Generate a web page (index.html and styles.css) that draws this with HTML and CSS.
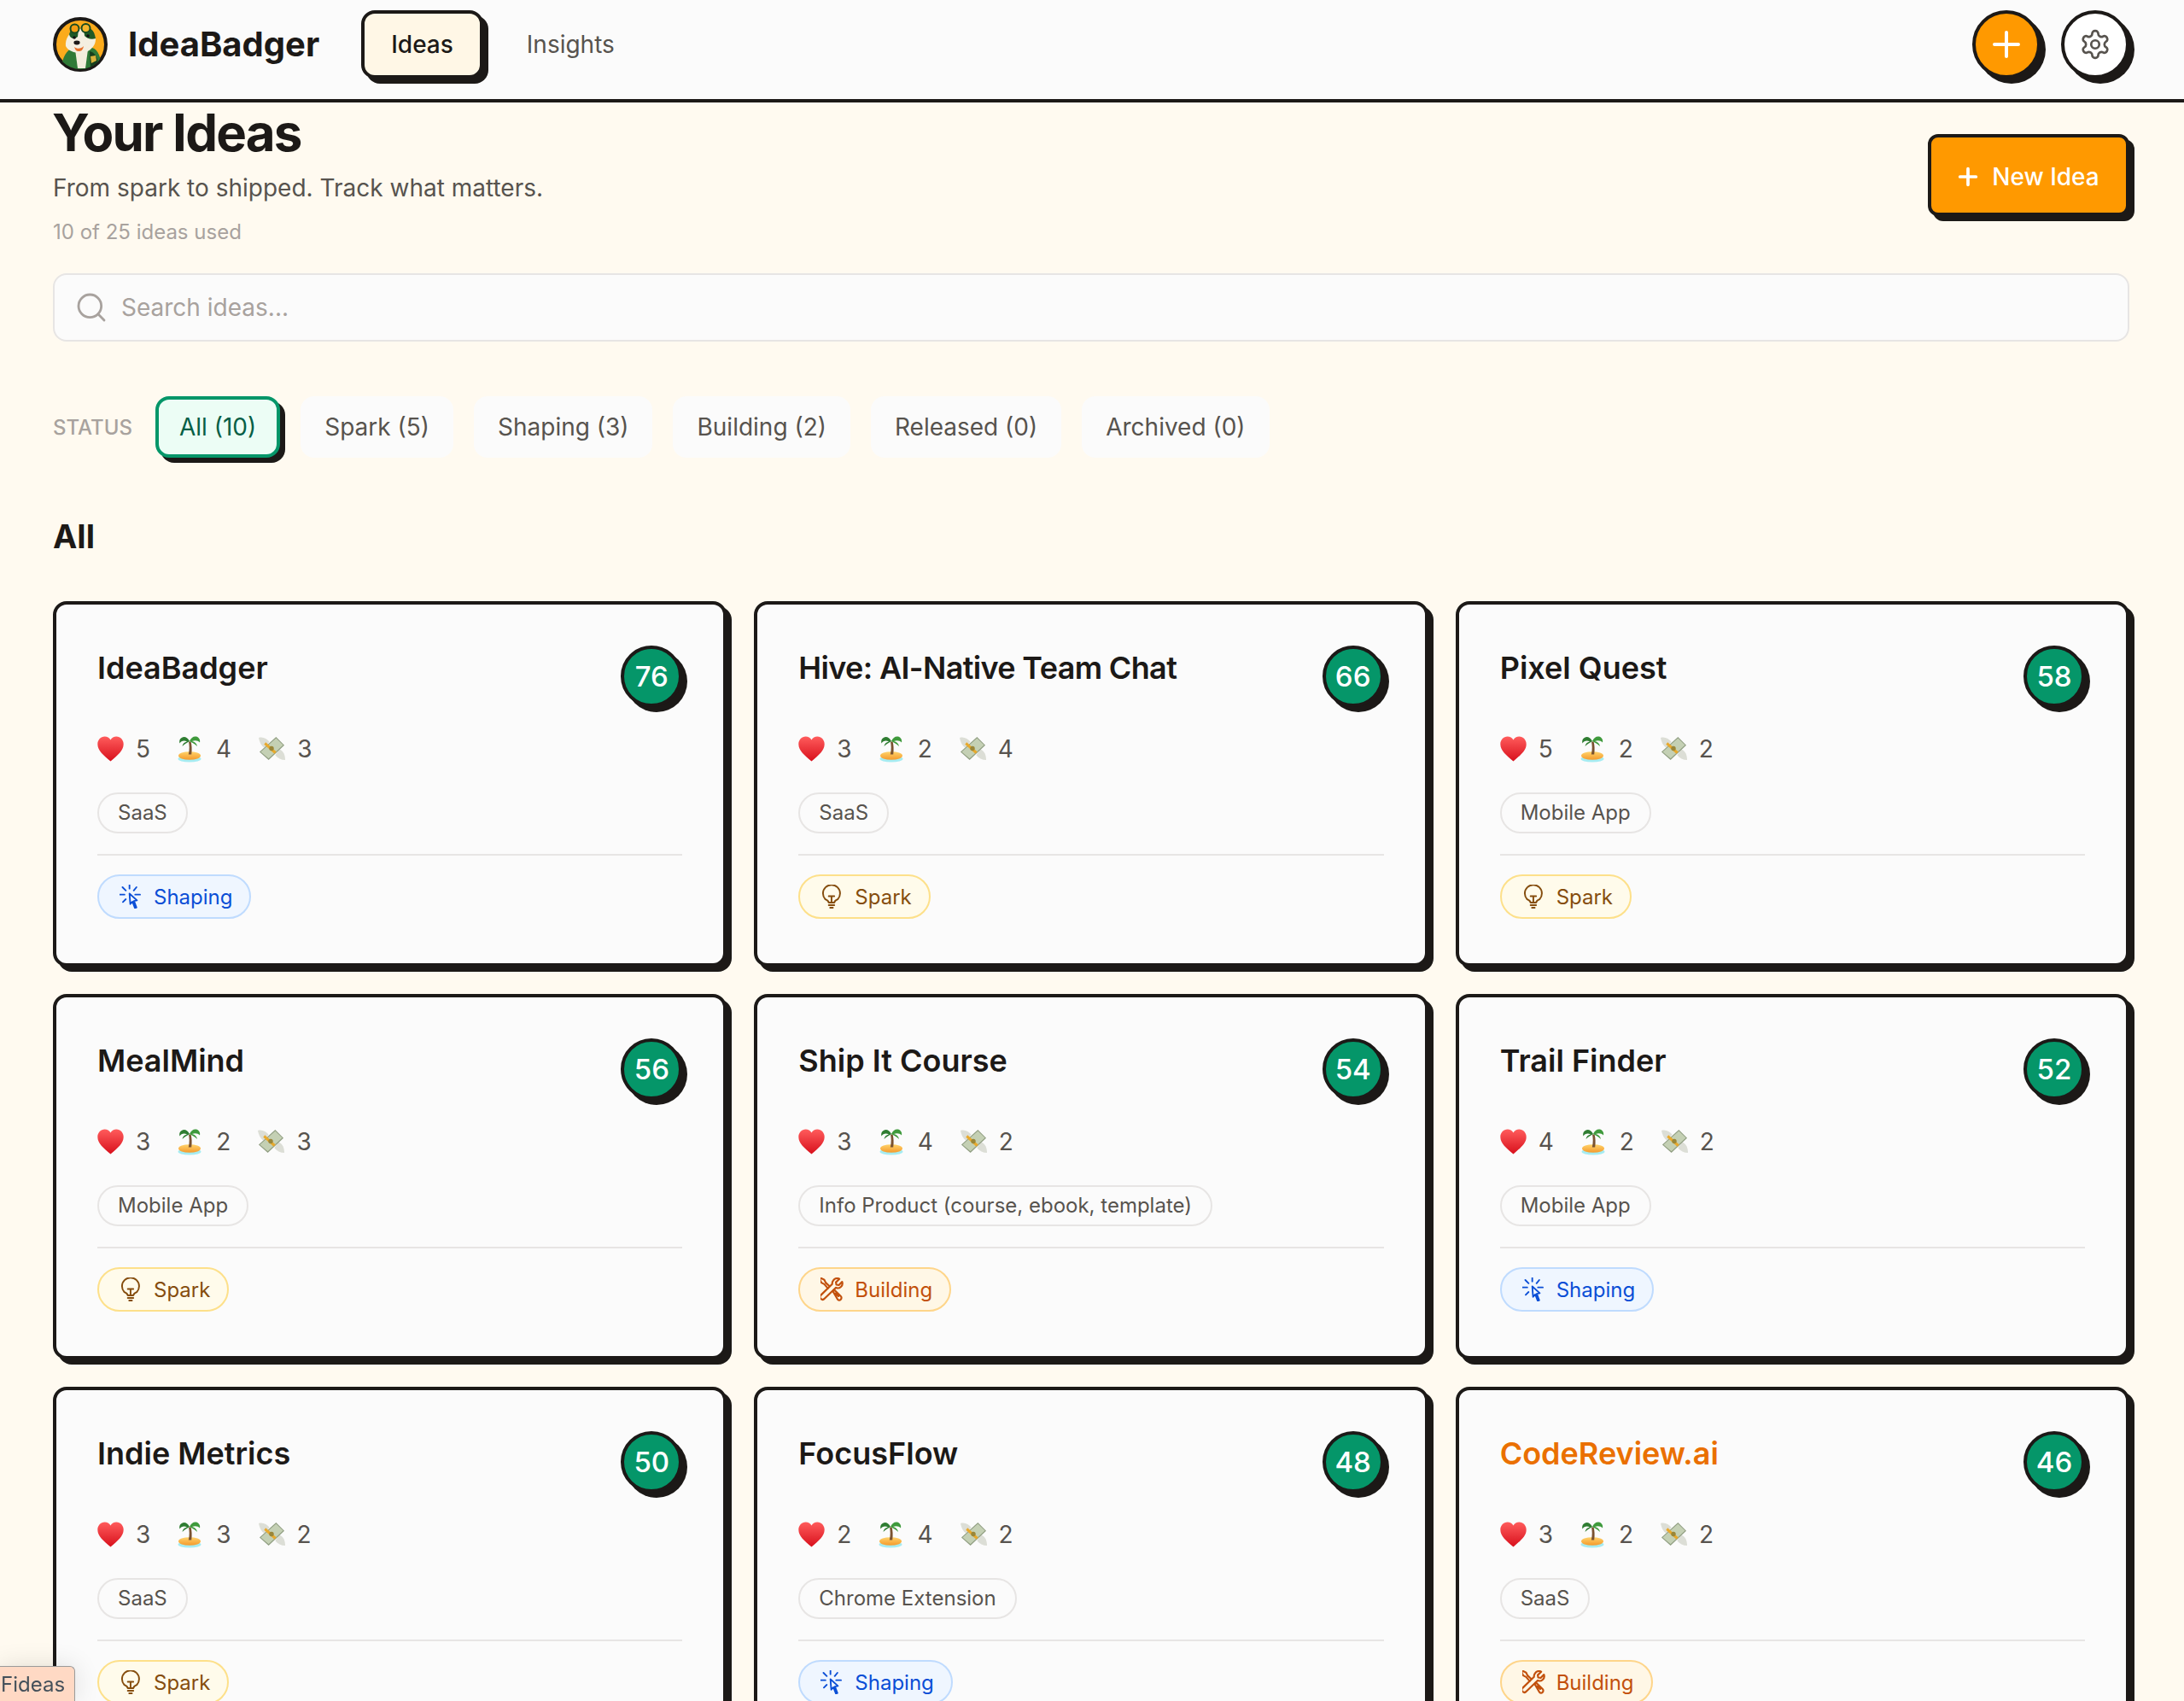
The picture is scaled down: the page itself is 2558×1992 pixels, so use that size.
FILE: index.html
```html
<!DOCTYPE html>
<html lang="en">
<head>
    <meta charset="UTF-8">
    <title>IdeaBadger</title>
    <link rel="stylesheet" href="styles.css">
</head>

<body>
  <!-- shared icons -->
  <svg class="sprite" xmlns="http://www.w3.org/2000/svg">
    <defs>
      <linearGradient id="heart-fill" x1="0" y1="0" x2="0" y2="1">
        <stop offset="0" stop-color="#ff5c5c"/>
        <stop offset="1" stop-color="#d8101c"/>
      </linearGradient>
      <linearGradient id="sand-fill" x1="0" y1="0" x2="0" y2="1">
        <stop offset="0" stop-color="#ffd36b"/>
        <stop offset="1" stop-color="#f49a2c"/>
      </linearGradient>
      <symbol id="i-heart" viewBox="0 0 30 30">
        <path fill="url(#heart-fill)" d="M15 29C7 22 .3 17 .3 9.600 .3 4.800 3.900 1 8.400 1c2.800 0 5.200 1.400 6.600 3.800C16.400 2.400 18.800 1 21.600 1c4.500 0 8.100 3.800 8.100 8.600C29.700 17 23 22 15 29z"/>
      </symbol>
      <symbol id="i-island" viewBox="0 0 31 32">
        <ellipse cx="14" cy="27.800" rx="13.500" ry="3.800" fill="#a6ecf2"/>
        <ellipse cx="14" cy="24" rx="13" ry="4.800" fill="url(#sand-fill)"/>
        <path d="M13 7.500c.8 4 1.200 9 -.2 15h3.400c.8-6 .4-11-.6-15z" fill="#7a5230"/>
        <path d="M14 7C11 1 6 .5 3 4.500c-1 1.500-1 3.500-.5 5C4 6.500 8 5.500 11 7.500 8 8 6 10 5.500 13 8.500 10 11.500 8.500 14 7z" fill="#2f7d32"/>
        <path d="M14 7c2-5 7-7 10.500-4 1.500 1.500 2 3.500 1.500 5.500-2-2.500-6-3-9-1.500 3 .5 5.500 2.500 6 6C20 10 17 8.500 14 7z" fill="#3f9a3c"/>
      </symbol>
      <symbol id="i-money" viewBox="0 0 32 31">
        <path d="M0 2c5-1.500 10 1 13 5l-6 7C3 12 1 7 0 2z" fill="#dcded6"/>
        <path d="M32 29c-5 0-9-2-12-6l5-7c5 2 7 7 7 13z" fill="#dcded6"/>
        <path d="M1 19 21 1l10 10-19 18z" fill="#8f9d80"/>
        <path d="M2.500 19 21 2.500l8.500 8.300L12 27z" fill="#c4d0b4"/>
        <path d="M8.500 7.500l13 11.500-2.500 2.500L6.500 10z" fill="#e8a92c"/>
        <circle cx="15.500" cy="15" r="2.800" fill="#9a8638"/>
      </symbol>
      <symbol id="i-spark" viewBox="1 0 24 26" fill="none" stroke="currentColor" stroke-width="1.800" stroke-linecap="round" stroke-linejoin="round">
        <path d="M9 19.500c-.2-1.300-1.300-2.400-3.700-3.500A9.300 9.300 0 1 1 18.700 16c-2.400 1.100-3.500 2.200-3.700 3.500z"/>
        <path d="M9 12.500h6M12 12.500v7M9 22.200h6M10.500 25h3"/>
      </symbol>
      <symbol id="i-shaping" viewBox="0 0 24 24" fill="none" stroke="currentColor" stroke-width="1.600" stroke-linecap="round" stroke-linejoin="round">
        <path d="M10 .5v3.500M3 2.600l3.300 3.300M17 2.600l-2.700 3.300M.3 10h4.700M15.700 10h4.900M3.400 17.400l2.900-2.800"/>
        <path d="M10 9l.8 10.500 2.200-2.500 2.500 6.500 1.500-.6-2.500-6.500 3-.6z"/>
      </symbol>
      <symbol id="i-building" viewBox="3 1.500 22 22" fill="none" stroke="currentColor" stroke-width="1.700" stroke-linecap="round" stroke-linejoin="round">
        <path d="M14.800 4.200a4.300 4.300 0 0 1 5.600-1.400l-3.200 3.100.4 2.300 2.300.4 3-3.100a4.300 4.300 0 0 1-5.800 5.400L6.700 21a2.300 2.300 0 0 1-3.500-3.100L13.800 7.600a4.300 4.300 0 0 1 1-3.400z"/>
        <path d="M9.700 11.400 6.500 7.700 3.800 6.300 2.300 3.500l1.300-1.300 2.900 1.500 1.300 2.600 3.500 3.300"/>
        <path d="M14.300 14l1.200-1.200 6.200 6a2 2 0 0 1-2.900 2.900zM17 16.200l2.500 2.500"/>
      </symbol>
    </defs>
  </svg>

  <header class="topbar">
    <div class="brand">
      <svg class="logo" viewBox="0 0 64 64" xmlns="http://www.w3.org/2000/svg">
        <defs><clipPath id="logo-clip"><circle cx="32" cy="32" r="29"/></clipPath></defs>
        <circle cx="32" cy="32" r="30" fill="#fbab1c" stroke="#1c1917" stroke-width="4"/>
        <g clip-path="url(#logo-clip)">
          <path d="M10 62c0-14 6-24 14-26l22 0c7 2 11 12 11 26z" fill="#2f7a37"/>
          <path d="M26 38l3 22h9l3-22z" fill="#f3eedd"/>
          <path d="M43 40c6 1 10 8 10 17l-9 3z" fill="#173f1d"/>
          <path d="M15 34c-1-8 4-17 13-20l12-1c6 2 9 7 10 13 0 7-5 12-11 15-8 2-20 1-24-7z" fill="#f4efe0"/>
          <path d="M21 15l-2 5c1 6 7 6 10 3l1-9zM36 13l1 9c3 3 8 5 13 3-1-6-3-10-7-12z" fill="#1e5a26"/>
          <circle cx="25" cy="24" r="1.800" fill="#111"/>
          <circle cx="41" cy="22" r="1.800" fill="#111"/>
          <circle cx="25.500" cy="13.500" r="5" fill="#f39c12" stroke="#174a1f" stroke-width="2"/>
          <circle cx="38.500" cy="13" r="5" fill="#f5b52c" stroke="#174a1f" stroke-width="2"/>
          <ellipse cx="28" cy="30" rx="3.600" ry="2.400" fill="#1c1917"/>
          <path d="M25 35c3 2.500 8 2.500 11-1-1 5-3 6-6 6-3 0-4-2-5-5z" fill="#e8722c"/>
          <path d="M44 46l6-1 1 6-6 3z" fill="#d9b23a"/>
        </g>
      </svg>
      <span class="brand-name">IdeaBadger</span>
    </div>
    <nav class="nav">
      <a class="nav-link active">Ideas</a>
      <a class="nav-link">Insights</a>
    </nav>
    <div class="top-actions">
      <button class="round-btn orange">
        <svg viewBox="0 0 24 24" width="48" height="48" fill="none" stroke="currentColor" stroke-width="2" stroke-linecap="round"><path d="M5 12h14M12 5v14"/></svg>
      </button>
      <button class="round-btn white">
        <svg viewBox="0 0 24 24" width="38" height="38" fill="none" stroke="currentColor" stroke-width="1.700" stroke-linecap="round" stroke-linejoin="round"><path d="M12.220 2h-.44a2 2 0 0 0-2 2v.18a2 2 0 0 1-1 1.730l-.43.25a2 2 0 0 1-2 0l-.15-.08a2 2 0 0 0-2.730.73l-.22.38a2 2 0 0 0 .73 2.730l.15.1a2 2 0 0 1 1 1.720v.51a2 2 0 0 1-1 1.740l-.15.09a2 2 0 0 0-.73 2.730l.22.38a2 2 0 0 0 2.730.73l.15-.08a2 2 0 0 1 2 0l.43.25a2 2 0 0 1 1 1.730V20a2 2 0 0 0 2 2h.44a2 2 0 0 0 2-2v-.18a2 2 0 0 1 1-1.730l.43-.25a2 2 0 0 1 2 0l.15.08a2 2 0 0 0 2.730-.73l.22-.39a2 2 0 0 0-.73-2.730l-.15-.08a2 2 0 0 1-1-1.740v-.5a2 2 0 0 1 1-1.740l.15-.09a2 2 0 0 0 .73-2.730l-.22-.38a2 2 0 0 0-2.730-.73l-.15.08a2 2 0 0 1-2 0l-.43-.25a2 2 0 0 1-1-1.730V4a2 2 0 0 0-2-2z"/><circle cx="12" cy="12" r="3"/></svg>
      </button>
    </div>
  </header>

  <main class="page">
    <div class="page-head">
      <div>
        <h1>Your Ideas</h1>
        <p class="subtitle">From spark to shipped. Track what matters.</p>
        <p class="usage">10 of 25 ideas used</p>
      </div>
      <button class="new-idea">
        <svg viewBox="0 0 24 24" width="32" height="32" fill="none" stroke="currentColor" stroke-width="2.800" stroke-linecap="round"><path d="M5 12h14M12 5v14"/></svg>
        New Idea
      </button>
    </div>

    <div class="search">
      <svg viewBox="0 0 24 24" width="40" height="40" fill="none" stroke="currentColor" stroke-width="1.700" stroke-linecap="round"><circle cx="11" cy="11" r="8"/><path d="m21 21-4.300-4.300"/></svg>
      <span>Search ideas...</span>
    </div>

    <div class="filters">
      <span class="filter-label">STATUS</span>
      <a class="filter selected">All (10)</a>
      <a class="filter">Spark (5)</a>
      <a class="filter">Shaping (3)</a>
      <a class="filter">Building (2)</a>
      <a class="filter">Released (0)</a>
      <a class="filter">Archived (0)</a>
    </div>

    <h2>All</h2>

    <div class="grid">
      <article class="card">
        <div class="card-top"><h3>IdeaBadger</h3><span class="score">76</span></div>
        <div class="metrics">
          <span class="metric"><svg class="emoji"><use href="#i-heart"/></svg>5</span>
          <span class="metric"><svg class="emoji"><use href="#i-island"/></svg>4</span>
          <span class="metric"><svg class="emoji"><use href="#i-money"/></svg>3</span>
        </div>
        <div class="category"><span class="tag">SaaS</span></div>
        <span class="status shaping"><svg><use href="#i-shaping"/></svg>Shaping</span>
      </article>

      <article class="card">
        <div class="card-top"><h3 class="tight">Hive: AI-Native Team Chat</h3><span class="score">66</span></div>
        <div class="metrics">
          <span class="metric"><svg class="emoji"><use href="#i-heart"/></svg>3</span>
          <span class="metric"><svg class="emoji"><use href="#i-island"/></svg>2</span>
          <span class="metric"><svg class="emoji"><use href="#i-money"/></svg>4</span>
        </div>
        <div class="category"><span class="tag">SaaS</span></div>
        <span class="status spark"><svg><use href="#i-spark"/></svg>Spark</span>
      </article>

      <article class="card">
        <div class="card-top"><h3>Pixel Quest</h3><span class="score">58</span></div>
        <div class="metrics">
          <span class="metric"><svg class="emoji"><use href="#i-heart"/></svg>5</span>
          <span class="metric"><svg class="emoji"><use href="#i-island"/></svg>2</span>
          <span class="metric"><svg class="emoji"><use href="#i-money"/></svg>2</span>
        </div>
        <div class="category"><span class="tag">Mobile App</span></div>
        <span class="status spark"><svg><use href="#i-spark"/></svg>Spark</span>
      </article>

      <article class="card">
        <div class="card-top"><h3>MealMind</h3><span class="score">56</span></div>
        <div class="metrics">
          <span class="metric"><svg class="emoji"><use href="#i-heart"/></svg>3</span>
          <span class="metric"><svg class="emoji"><use href="#i-island"/></svg>2</span>
          <span class="metric"><svg class="emoji"><use href="#i-money"/></svg>3</span>
        </div>
        <div class="category"><span class="tag">Mobile App</span></div>
        <span class="status spark"><svg><use href="#i-spark"/></svg>Spark</span>
      </article>

      <article class="card">
        <div class="card-top"><h3>Ship It Course</h3><span class="score">54</span></div>
        <div class="metrics">
          <span class="metric"><svg class="emoji"><use href="#i-heart"/></svg>3</span>
          <span class="metric"><svg class="emoji"><use href="#i-island"/></svg>4</span>
          <span class="metric"><svg class="emoji"><use href="#i-money"/></svg>2</span>
        </div>
        <div class="category"><span class="tag">Info Product (course, ebook, template)</span></div>
        <span class="status building"><svg><use href="#i-building"/></svg>Building</span>
      </article>

      <article class="card">
        <div class="card-top"><h3>Trail Finder</h3><span class="score">52</span></div>
        <div class="metrics">
          <span class="metric"><svg class="emoji"><use href="#i-heart"/></svg>4</span>
          <span class="metric"><svg class="emoji"><use href="#i-island"/></svg>2</span>
          <span class="metric"><svg class="emoji"><use href="#i-money"/></svg>2</span>
        </div>
        <div class="category"><span class="tag">Mobile App</span></div>
        <span class="status shaping"><svg><use href="#i-shaping"/></svg>Shaping</span>
      </article>

      <article class="card">
        <div class="card-top"><h3>Indie Metrics</h3><span class="score">50</span></div>
        <div class="metrics">
          <span class="metric"><svg class="emoji"><use href="#i-heart"/></svg>3</span>
          <span class="metric"><svg class="emoji"><use href="#i-island"/></svg>3</span>
          <span class="metric"><svg class="emoji"><use href="#i-money"/></svg>2</span>
        </div>
        <div class="category"><span class="tag">SaaS</span></div>
        <span class="status spark"><svg><use href="#i-spark"/></svg>Spark</span>
      </article>

      <article class="card">
        <div class="card-top"><h3>FocusFlow</h3><span class="score">48</span></div>
        <div class="metrics">
          <span class="metric"><svg class="emoji"><use href="#i-heart"/></svg>2</span>
          <span class="metric"><svg class="emoji"><use href="#i-island"/></svg>4</span>
          <span class="metric"><svg class="emoji"><use href="#i-money"/></svg>2</span>
        </div>
        <div class="category"><span class="tag">Chrome Extension</span></div>
        <span class="status shaping"><svg><use href="#i-shaping"/></svg>Shaping</span>
      </article>

      <article class="card">
        <div class="card-top"><h3 class="hovered">CodeReview.ai</h3><span class="score">46</span></div>
        <div class="metrics">
          <span class="metric"><svg class="emoji"><use href="#i-heart"/></svg>3</span>
          <span class="metric"><svg class="emoji"><use href="#i-island"/></svg>2</span>
          <span class="metric"><svg class="emoji"><use href="#i-money"/></svg>2</span>
        </div>
        <div class="category"><span class="tag">SaaS</span></div>
        <span class="status building"><svg><use href="#i-building"/></svg>Building</span>
      </article>
    </div>
  </main>

  <div class="link-tip">Fideas</div>
</body>
</html>
```

FILE: styles.css
```css
* {
  box-sizing: border-box;
}
html, body {
  height: 100%;
  overflow: hidden;
}
body {
  margin: 0;
  background: #fffaf0;
  color: #1c1917;
  font-family: Inter, "Liberation Sans", sans-serif;
}
h1, h2, h3, p {
  margin: 0;
}
button {
  font-family: inherit;
  cursor: pointer;
}
.sprite {
  display: block;
  width: 0;
  height: 0;
}

/* top bar */
.topbar {
  display: flex;
  align-items: center;
  height: 120px;
  padding: 12px 64px 24px 62px;
  background: #fbfbfb;
  border-bottom: 4px solid #1c1917;
}
.brand {
  display: flex;
  align-items: center;
  gap: 24px;
}
.logo {
  width: 64px;
  height: 64px;
}
.brand-name {
  padding-bottom: 2px;
  font-size: 40px;
  font-weight: 700;
}
.nav {
  display: flex;
  gap: 16px;
  margin-left: 49px;
}
.nav-link {
  display: block;
  height: 80px;
  padding: 0 31px;
  border: 4px solid transparent;
  border-radius: 16px;
  font-size: 28px;
  line-height: 72px;
  color: #57534e;
}
.nav-link.active {
  background: #fff7e6;
  border-color: #1c1917;
  box-shadow: 6px 6px 0 #1c1917;
  color: #1c1917;
  font-weight: 500;
}
.top-actions {
  display: flex;
  gap: 24px;
  margin-left: auto;
}
.round-btn {
  display: flex;
  align-items: center;
  justify-content: center;
  width: 80px;
  height: 80px;
  padding: 0;
  border: 4px solid #1c1917;
  border-radius: 50%;
  box-shadow: 6px 6px 0 #1c1917;
}
.round-btn.orange {
  background: #ff9900;
  color: #fff;
}
.round-btn.white {
  background: #fff;
  color: #57534e;
}

/* page head */
.page {
  padding: 0 64px 0 62px;
}
.page-head {
  display: flex;
  align-items: center;
  justify-content: space-between;
}
h1 {
  margin-left: -1px;
  font-size: 60px;
  font-weight: 700;
  line-height: 70px;
  letter-spacing: -1.8px;
}
.subtitle {
  margin-top: 10px;
  font-size: 28px;
  line-height: 40px;
  color: #57534e;
}
.usage {
  margin-top: 14px;
  font-size: 24px;
  line-height: 36px;
  color: #a8a29e;
}
.new-idea {
  display: flex;
  align-items: center;
  gap: 12px;
  height: 96px;
  width: 236px;
  padding: 3px 4px 0 0;
  justify-content: center;
  border: 4px solid #1c1917;
  border-radius: 12px;
  background: #ff9900;
  box-shadow: 6px 6px 0 #1c1917;
  color: #fff;
  font-size: 28px;
  font-weight: 500;
}

.search {
  display: flex;
  align-items: center;
  gap: 15px;
  height: 80px;
  margin-top: 30px;
  padding: 0 23px;
  background: #fbfbfb;
  border: 2px solid #e7e5e4;
  border-radius: 16px;
  font-size: 28px;
  color: #a8a29e;
}

/* filters */
.filters {
  display: flex;
  align-items: center;
  gap: 24px;
  margin-top: 64px;
}
.filter-label {
  margin-right: 3px;
  font-size: 24px;
  font-weight: 500;
  color: #a8a29e;
}
.filter {
  display: block;
  height: 72px;
  padding: 0 24px;
  background: #fbfbfb;
  border: 4px solid transparent;
  border-radius: 16px;
  font-size: 28px;
  line-height: 64px;
  color: #57534e;
}
.filter.selected {
  background: #ecfdf5;
  border-color: #059669;
  box-shadow: 6px 6px 0 #1c1917;
  color: #065f46;
}
h2 {
  margin-top: 68px;
  font-size: 38px;
  font-weight: 700;
  line-height: 48px;
}

/* cards */
.grid {
  display: grid;
  grid-template-columns: repeat(3, 1fr);
  gap: 32px;
  margin-top: 52px;
}
.card {
  min-height: 428px;
  padding: 48px;
  background: #fbfbfb;
  border: 4px solid #1c1917;
  border-radius: 16px;
  box-shadow: 6px 6px 0 #1c1917;
}
.card-top {
  display: flex;
  justify-content: space-between;
  align-items: flex-start;
}
h3 {
  font-size: 36px;
  font-weight: 600;
  line-height: 52px;
}
h3.tight {
  letter-spacing: -0.65px;
}
h3.hovered {
  color: #ea7000;
}
.score {
  display: block;
  width: 72px;
  height: 72px;
  background: #059669;
  border: 4px solid #1c1917;
  border-radius: 50%;
  box-shadow: 6px 6px 0 #1c1917;
  color: #fff;
  font-size: 33px;
  font-weight: 500;
  line-height: 64px;
  text-align: center;
}
.metrics {
  display: flex;
  gap: 32px;
  height: 40px;
  margin-top: 29px;
}
.metric {
  display: flex;
  align-items: center;
  gap: 14px;
  font-size: 28px;
  color: #57534e;
}
.emoji {
  width: 31px;
  height: 32px;
}
.category {
  margin-top: 31px;
  padding-bottom: 24px;
  border-bottom: 2px solid #e7e5e4;
}
.tag {
  display: inline-block;
  height: 48px;
  padding: 0 22px;
  border: 2px solid #e7e5e4;
  border-radius: 24px;
  font-size: 24px;
  line-height: 44px;
  color: #57534e;
  vertical-align: top;
}
.status {
  display: inline-flex;
  align-items: center;
  gap: 12px;
  height: 52px;
  margin-top: 22px;
  padding: 0 20px 0 24px;
  border: 2px solid;
  border-radius: 26px;
  font-size: 24px;
}
.status svg {
  width: 28px;
  height: 28px;
  overflow: visible;
}
.status.shaping {
  background: #eff6ff;
  border-color: #bfdbfe;
  color: #0a4ed6;
}
.status.spark {
  background: #fffbeb;
  border-color: #fde08a;
  color: #854d0e;
}
.status.building {
  background: #fff7e6;
  border-color: #fed58a;
  color: #c2500c;
}

/* browser link preview in the corner */
.link-tip {
  position: fixed;
  left: 0;
  bottom: 0;
  width: 88px;
  height: 41px;
  padding: 6px 0 0 1px;
  background: #ffd9c4;
  border: 1px solid #9a9a9a;
  border-left: 0;
  border-bottom: 0;
  border-radius: 0 6px 0 0;
  box-shadow: 0 0 30px rgba(0, 0, 0, 0.12);
  font-size: 24px;
  color: #44505a;
}
```
